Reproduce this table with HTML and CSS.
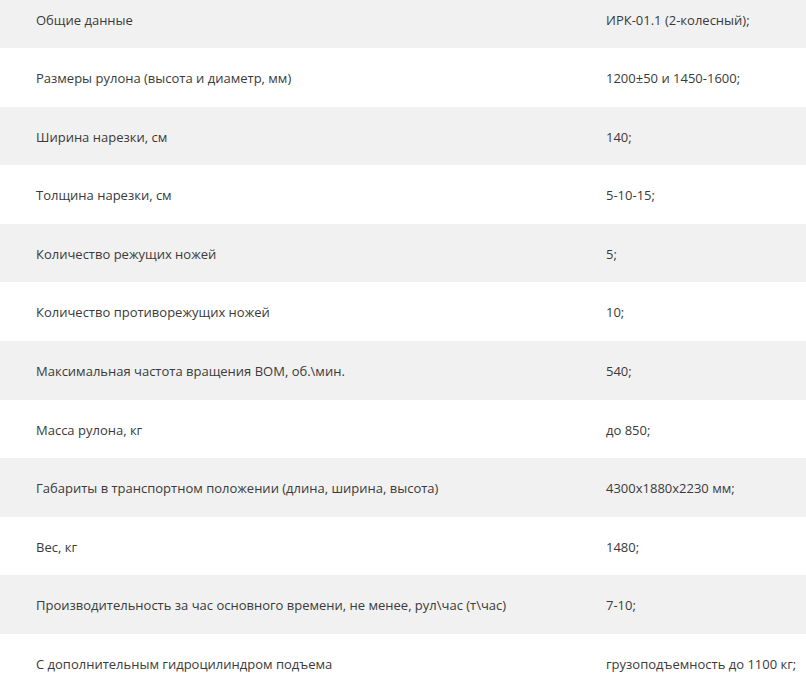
FILE: index.html
```html
<!DOCTYPE html>
<html lang="ru">
<head>
<meta charset="utf-8">
<title>Характеристики</title>
<link rel="stylesheet" href="styles.css">
</head>
<body>
<div class="specs">
  <div class="row"><div class="cell name">Общие данные</div><div class="cell val">ИРК-01.1 (2-колесный);</div></div>
  <div class="row"><div class="cell name">Размеры рулона (высота и диаметр, мм)</div><div class="cell val">1200±50 и 1450-1600;</div></div>
  <div class="row"><div class="cell name">Ширина нарезки, см</div><div class="cell val">140;</div></div>
  <div class="row"><div class="cell name">Толщина нарезки, см</div><div class="cell val">5-10-15;</div></div>
  <div class="row"><div class="cell name">Количество режущих ножей</div><div class="cell val">5;</div></div>
  <div class="row"><div class="cell name">Количество противорежущих ножей</div><div class="cell val">10;</div></div>
  <div class="row"><div class="cell name">Максимальная частота вращения ВОМ, об.\мин.</div><div class="cell val">540;</div></div>
  <div class="row"><div class="cell name">Масса рулона, кг</div><div class="cell val">до 850;</div></div>
  <div class="row"><div class="cell name">Габариты в транспортном положении (длина, ширина, высота)</div><div class="cell val">4300х1880х2230 мм;</div></div>
  <div class="row"><div class="cell name">Вес, кг</div><div class="cell val">1480;</div></div>
  <div class="row"><div class="cell name">Производительность за час основного времени, не менее, рул\час (т\час)</div><div class="cell val">7-10;</div></div>
  <div class="row"><div class="cell name">С дополнительным гидроцилиндром подъема</div><div class="cell val">грузоподъемность до 1100 кг;</div></div>
</div>
</body>
</html>
```

FILE: styles.css
```css
html, body {
  margin: 0;
  padding: 0;
  background: #ffffff;
  overflow: hidden;
}

body {
  font-family: "Open Sans", "Liberation Sans", sans-serif;
  font-size: 13px;
  color: #3a3a3a;
}

.specs {
  margin-top: -10.5px;
}

.row {
  display: grid;
  grid-template-columns: 570px 1fr;
}

.row:nth-child(odd) {
  background: #f1f1f1;
}

.cell {
  padding: 21px 0 19px 36px;
  line-height: 18.6px;
}
```
